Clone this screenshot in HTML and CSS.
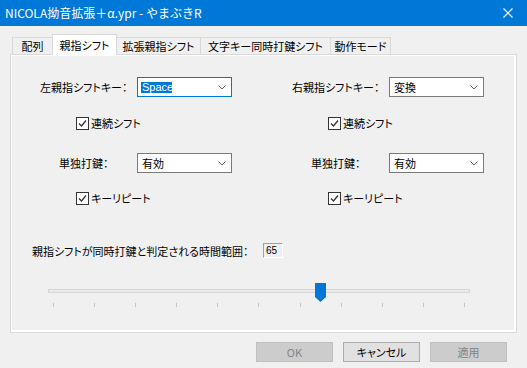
FILE: index.html
```html
<!DOCTYPE html>
<html lang="ja">
<head>
<meta charset="utf-8">
<link rel="stylesheet" href="styles.css">
</head>
<body>
<div class="window">
  <div class="titlebar">
    <span class="title">NICOLA拗音拡張＋α.ypr - やまぶきR</span>
    <svg class="close" width="10" height="10" viewBox="0 0 10 10"><path d="M0.5 0.5L9.5 9.5M9.5 0.5L0.5 9.5" stroke="#fff" stroke-width="1.1" fill="none"/></svg>
  </div>
  <div class="content">
    <div class="tabs">
      <div class="tab w1">配列</div>
      <div class="tab active w2">親指シフト</div>
      <div class="tab w3">拡張親指シフト</div>
      <div class="tab w4">文字キー同時打鍵シフト</div>
      <div class="tab w5">動作モード</div>
    </div>
    <div class="panel">
      <div class="cols">
        <div class="col">
          <div class="combo-row">
            <span class="lbl lbl-key">左親指シフトキー：</span>
            <div class="combo focused"><span class="sel">Space</span><svg class="chev" width="8" height="5" viewBox="0 0 8 5"><path d="M0.5 0.5L4 4L7.5 0.5" stroke="#606060" stroke-width="1" fill="none"/></svg></div>
          </div>
          <div class="check chk-first"><span class="box"><svg width="11" height="11" viewBox="0 0 11 11"><path d="M2 5.5L4.5 8L9 2.5" stroke="#333" stroke-width="1.3" fill="none"/></svg></span><span class="chk-text">連続シフト</span></div>
          <div class="combo-row row-second">
            <span class="lbl lbl-single">単独打鍵：</span>
            <div class="combo"><span class="val">有効</span><svg class="chev" width="8" height="5" viewBox="0 0 8 5"><path d="M0.5 0.5L4 4L7.5 0.5" stroke="#606060" stroke-width="1" fill="none"/></svg></div>
          </div>
          <div class="check chk-second"><span class="box"><svg width="11" height="11" viewBox="0 0 11 11"><path d="M2 5.5L4.5 8L9 2.5" stroke="#333" stroke-width="1.3" fill="none"/></svg></span><span class="chk-text">キーリピート</span></div>
        </div>
        <div class="col">
          <div class="combo-row">
            <span class="lbl lbl-key">右親指シフトキー：</span>
            <div class="combo"><span class="val">変換</span><svg class="chev" width="8" height="5" viewBox="0 0 8 5"><path d="M0.5 0.5L4 4L7.5 0.5" stroke="#606060" stroke-width="1" fill="none"/></svg></div>
          </div>
          <div class="check chk-first"><span class="box"><svg width="11" height="11" viewBox="0 0 11 11"><path d="M2 5.5L4.5 8L9 2.5" stroke="#333" stroke-width="1.3" fill="none"/></svg></span><span class="chk-text">連続シフト</span></div>
          <div class="combo-row row-second">
            <span class="lbl lbl-single">単独打鍵：</span>
            <div class="combo"><span class="val">有効</span><svg class="chev" width="8" height="5" viewBox="0 0 8 5"><path d="M0.5 0.5L4 4L7.5 0.5" stroke="#606060" stroke-width="1" fill="none"/></svg></div>
          </div>
          <div class="check chk-second"><span class="box"><svg width="11" height="11" viewBox="0 0 11 11"><path d="M2 5.5L4.5 8L9 2.5" stroke="#333" stroke-width="1.3" fill="none"/></svg></span><span class="chk-text">キーリピート</span></div>
        </div>
      </div>
      <div class="range-row">
        <span class="range-lbl">親指シフトが同時打鍵と判定される時間範囲：</span>
        <span class="numbox">65</span>
      </div>
      <div class="slider">
        <div class="track"></div>
        <div class="ticks">
          <i></i><i></i><i></i><i></i><i></i><i></i><i></i><i></i><i></i><i></i><i></i>
        </div>
        <svg class="thumb" width="11" height="19" viewBox="0 0 11 19"><path d="M0 0H11V14L5.5 19L0 14Z" fill="#0078d7"/></svg>
      </div>
    </div>
    <div class="buttons">
      <div class="btn disabled">OK</div>
      <div class="btn">キャンセル</div>
      <div class="btn disabled">適用</div>
    </div>
  </div>
</div>
</body>
</html>
```
FILE: styles.css
```css
* { box-sizing: border-box; }
html, body { margin: 0; padding: 0; }
body {
  width: 527px;
  height: 368px;
  background: #f0f0f0;
  font-family: "Noto Sans CJK JP", "Noto Sans", sans-serif;
  font-size: 11px;
  color: #000;
  font-feature-settings: "palt" 1;
  overflow: hidden;
}
.window { width: 527px; height: 368px; display: flex; flex-direction: column; }
.titlebar {
  height: 26px;
  background: #0078d7;
  color: #fff;
  display: flex;
  align-items: center;
  justify-content: space-between;
  padding: 0 14px 0 5px;
  font-size: 12px;
  font-feature-settings: normal;
}
.title { line-height: 26px; }
.close { display: block; }
.content { padding: 8px 10px 0 10px; }
.tabs {
  display: flex;
  align-items: flex-end;
  height: 20px;
  padding-left: 2px;
  position: relative;
  z-index: 1;
}
.tab {
  height: 17px;
  border: 1px solid #d9d9d9;
  border-bottom: none;
  border-right: none;
  background: #f0f0f0;
  display: flex;
  align-items: center;
  justify-content: center;
  line-height: 1;
  padding-top: 1px;
  white-space: nowrap;
}
.tab.w5 { border-right: 1px solid #d9d9d9; }
.tab.active {
  height: 21px;
  margin-bottom: -1px;
  background: #fff;
  border-right: 1px solid #d9d9d9;
}
.tab.active + .tab { border-left: none; }
.w1 { width: 40px; }
.w2 { width: 65px; }
.w3 { width: 83px; }
.w4 { width: 130px; }
.w5 { width: 61px; }
.panel {
  height: 279px;
  border: 1px solid #d9d9d9;
  box-shadow: inset -2px -2px 0 #fff, inset 1px 1px 0 #fff;
  background: #f0f0f0;
  padding-top: 22px;
}
.cols { display: grid; grid-template-columns: 252px 252px; }
.col { display: flex; flex-direction: column; }
.combo-row { display: flex; align-items: center; height: 20px; }
.lbl { width: 126px; white-space: nowrap; }
.lbl-key { padding-left: 29px; }
.lbl-single { padding-left: 48px; }
.combo {
  width: 95px;
  height: 20px;
  background: #fff;
  border: 1px solid #7a7a7a;
  display: flex;
  align-items: center;
  justify-content: space-between;
  padding: 0 5px 0 3px;
}
.combo.focused { border-color: #0078d7; }
.sel {
  background: #0078d7;
  color: #fff;
  font-family: "Liberation Sans", sans-serif;
  font-size: 11px;
  line-height: 11px;
  height: 11px;
  padding: 0 1px;
  width: 31px;
}
.val { padding-left: 1px; line-height: 1; }
.chev { display: block; margin-top: 1px; }
.check { display: flex; align-items: center; height: 13px; padding-left: 65px; }
.chk-first { margin-top: 20px; }
.row-second { margin-top: 23px; }
.chk-second { margin-top: 19px; }
.box {
  width: 13px;
  height: 13px;
  border: 1px solid #333;
  background: #fff;
  display: flex;
  align-items: center;
  justify-content: center;
  margin-right: 2px;
}
.box svg { display: block; }
.chk-text { line-height: 1; white-space: nowrap; }
.range-row {
  display: flex;
  align-items: center;
  height: 15px;
  margin-top: 38px;
  padding-left: 21px;
}
.range-lbl { width: 231px; white-space: nowrap; }
.numbox {
  width: 20px;
  height: 15px;
  border: 1px solid #fff;
  border-top-color: #a0a0a0;
  border-left-color: #a0a0a0;
  font-family: "Liberation Sans", sans-serif;
  font-size: 10px;
  line-height: 13px;
  padding-left: 2px;
}
.slider {
  position: relative;
  margin-top: 25px;
  margin-left: 37px;
  width: 422px;
  height: 24px;
}
.track {
  position: absolute;
  left: 0;
  top: 6px;
  width: 422px;
  height: 4px;
  background: #e7eaea;
  border: 1px solid #d6d6d6;
}
.ticks {
  position: absolute;
  left: 5px;
  top: 20px;
  width: 412px;
  height: 4px;
  display: flex;
  justify-content: space-between;
}
.ticks i { display: block; width: 1px; height: 4px; background: #c4c4c4; }
.thumb { position: absolute; left: 267px; top: 0; display: block; }
.buttons {
  display: flex;
  justify-content: flex-end;
  gap: 10px;
  margin-top: 9px;
  padding-right: 10px;
}
.btn {
  width: 77px;
  height: 20px;
  border: 1px solid #adadad;
  background: #e1e1e1;
  display: flex;
  align-items: center;
  justify-content: center;
  line-height: 1;
}
.btn.disabled {
  background: #cccccc;
  border-color: #bfbfbf;
  color: #838383;
}
```
